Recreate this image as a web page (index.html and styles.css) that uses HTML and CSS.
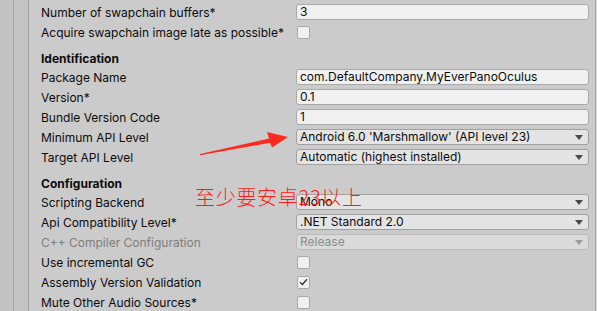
FILE: index.html
```html
<!DOCTYPE html>
<html lang="en">

<head>
    <meta charset="UTF-8" />
    <title>Player Settings</title>
    <link rel="stylesheet" href="styles.css">
</head>

<body>
    <div class="inspector">
        <div class="gutter outer"></div>
        <div class="gutter inner"></div>

        <div class="content">
            <!-- 上面的设置 -->
            <div class="row">
                <span class="label">Number of swapchain buffers*</span>
                <div class="field">3</div>
            </div>
            <div class="row">
                <span class="label">Acquire swapchain image late as possible*</span>
                <div class="check"></div>
            </div>

            <!-- Identification -->
            <div class="header">Identification</div>
            <div class="row">
                <span class="label">Package Name</span>
                <div class="field">com.DefaultCompany.MyEverPanoOculus</div>
            </div>
            <div class="row">
                <span class="label">Version*</span>
                <div class="field">0.1</div>
            </div>
            <div class="row">
                <span class="label">Bundle Version Code</span>
                <div class="field">1</div>
            </div>
            <div class="row">
                <span class="label">Minimum API Level</span>
                <div class="dropdown">Android 6.0 'Marshmallow' (API level 23)</div>
            </div>
            <div class="row">
                <span class="label">Target API Level</span>
                <div class="dropdown">Automatic (highest installed)</div>
            </div>

            <!-- Configuration -->
            <div class="header">Configuration</div>
            <div class="row">
                <span class="label">Scripting Backend</span>
                <div class="dropdown">Mono</div>
            </div>
            <div class="row">
                <span class="label">Api Compatibility Level*</span>
                <div class="dropdown">.NET Standard 2.0</div>
            </div>
            <div class="row disabled">
                <span class="label">C++ Compiler Configuration</span>
                <div class="dropdown">Release</div>
            </div>
            <div class="row">
                <span class="label">Use incremental GC</span>
                <div class="check"></div>
            </div>
            <div class="row">
                <span class="label">Assembly Version Validation</span>
                <div class="check">
                    <svg width="9" height="8" viewBox="0 0 9 8">
                        <path d="M1 4.2 L3.4 6.5 L8 1.2" fill="none" stroke="#333" stroke-width="1.3" />
                    </svg>
                </div>
            </div>
            <div class="row">
                <span class="label">Mute Other Audio Sources*</span>
                <div class="check"></div>
            </div>
        </div>

        <div class="edge"></div>
    </div>

    <!-- 红色标注 -->
    <svg class="arrow" width="597" height="311" viewBox="0 0 597 311">
        <polygon points="200,154 269,138.6 267,132 288,137 272,147.5 270,142.8 200,155.2" fill="#ff2a1f" />
    </svg>
    <div class="note">至少要安卓23以上</div>
</body>

</html>
```

FILE: styles.css
```css
* {
    margin: 0;
    padding: 0;
    box-sizing: border-box;
}

body {
    width: 597px;
    height: 311px;
    overflow: hidden;
    background-color: #cbcbcb;
    font-family: Inter, "Noto Sans", sans-serif;
    font-size: 12px;
    color: #0c0c0c;
}

.inspector {
    display: flex;
    height: 311px;
}

.gutter {
    flex: none;
    border-right: 1px solid #a6a6a6;
}

.gutter.outer {
    width: 14px;
    background-color: #c2c2c2;
}

.gutter.inner {
    width: 15px;
    background-color: #c4c4c4;
    border-right-color: #a2a2a2;
}

.content {
    flex: 1;
    padding: 2px 6px 0 12px;
}

.edge {
    flex: none;
    width: 2px;
    border-left: 1px solid #a8a8a8;
    background-color: #d6d6d6;
}

.row {
    display: grid;
    grid-template-columns: 255px 1fr;
    align-items: center;
    height: 20px;
}

.label {
    white-space: nowrap;
}

.header {
    height: 20px;
    line-height: 24px;
    margin-top: 5px;
    font-weight: 700;
}

.field,
.dropdown {
    height: 16px;
    line-height: 14px;
    padding-left: 3px;
    border: 1px solid #a9a9a9;
    border-radius: 3px;
    background-color: #f0f0f0;
    white-space: nowrap;
    overflow: hidden;
}

.dropdown {
    position: relative;
    background-color: #e4e4e4;
    border-color: #a0a0a0;
}

.dropdown::after {
    content: "";
    position: absolute;
    right: 5px;
    top: 5px;
    border-left: 4px solid transparent;
    border-right: 4px solid transparent;
    border-top: 5px solid #4a4a4a;
}

.disabled {
    color: #7e7e7e;
}

.disabled .dropdown {
    background-color: #dadada;
    border-color: #bababa;
    color: #8c8c8c;
}

.disabled .dropdown::after {
    border-top-color: #9a9a9a;
}

.check {
    display: flex;
    align-items: center;
    justify-content: center;
    width: 13px;
    height: 13px;
    margin-left: 1px;
    border: 1px solid #a9a9a9;
    border-radius: 2px;
    background-color: #f0f0f0;
}

.arrow {
    position: absolute;
    left: 0;
    top: 0;
}

.note {
    position: absolute;
    left: 195px;
    top: 184px;
    font-family: "Noto Sans CJK SC", sans-serif;
    font-weight: 300;
    font-size: 20px;
    letter-spacing: 0.7px;
    line-height: 26px;
    color: #ff1a1a;
}
```
